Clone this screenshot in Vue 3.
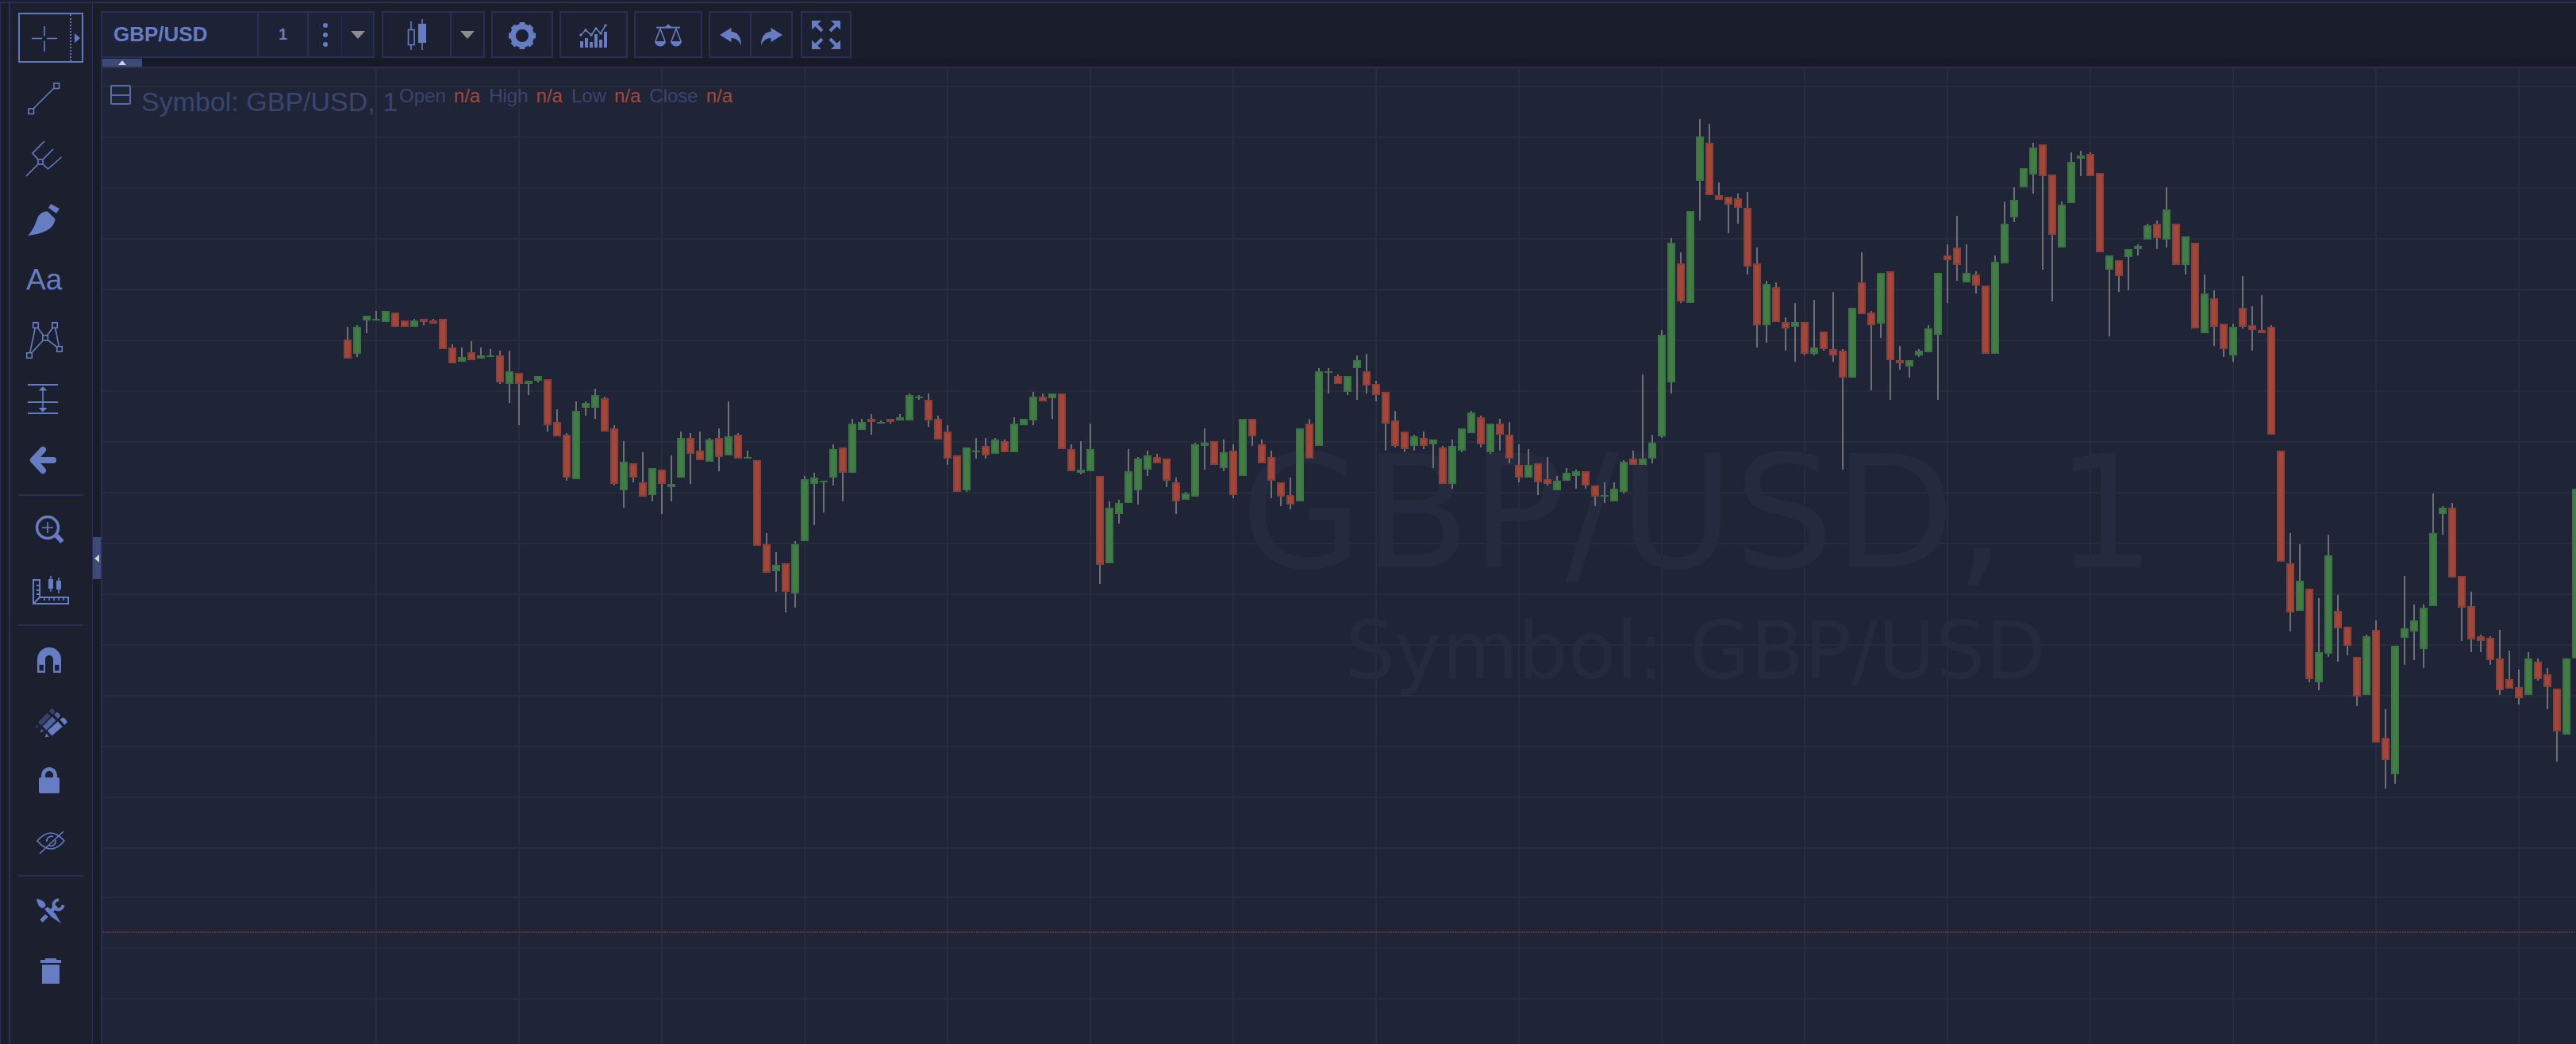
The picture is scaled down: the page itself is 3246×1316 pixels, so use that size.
<script setup>
// [up, bodyTop, bodyBottom, wickTop, wickBottom], one candle every 12px from x = 438
const rows = [
  [0,428,452,412,452],[1,412,446,410,450],[1,398,404,398,420],[1,402,404,392,404],[1,392,406,392,406],
  [0,394,412,394,412],[0,404,412,404,412],[1,404,412,402,412],[0,402,406,402,410],[0,404,408,402,408],
  [0,402,440,402,440],[0,438,458,434,458],[1,450,456,438,456],[0,444,454,430,454],[1,448,452,438,452],
  [1,448,450,440,450],[0,448,482,442,484],[1,468,484,442,508],[0,470,484,470,536],[1,480,484,480,498],
  [1,474,480,474,482],[0,478,536,478,544],[0,532,550,516,550],[0,548,602,546,606],[1,518,604,506,604],
  [1,508,514,506,524],[1,498,514,490,528],[0,502,544,500,544],[0,540,610,536,612],[1,582,618,556,640],
  [0,584,602,584,608],[0,608,626,570,626],[1,590,624,590,632],[0,592,610,592,648],[1,610,614,574,632],
  [1,552,602,544,602],[0,552,572,546,610],[0,568,580,544,580],[1,554,582,552,582],[0,552,576,540,594],
  [1,550,574,506,574],[0,548,578,546,578],[1,576,578,568,578],[0,580,688,580,688],[0,686,722,672,722],
  [1,712,720,696,746],[0,710,746,710,772],[1,686,748,682,766],[1,604,682,600,682],[1,602,610,596,662],
  [1,606,608,606,646],[1,566,602,560,612],[0,564,596,564,632],[1,534,596,528,596],[1,532,542,528,542],
  [0,528,532,522,548],[1,532,534,530,534],[0,528,532,528,534],[1,526,530,522,530],[1,498,530,496,530],
  [1,500,502,498,504],[0,504,530,496,538],[0,528,554,524,554],[0,544,578,536,586],[0,574,620,574,620],
  [1,564,618,564,620],[1,568,570,552,578],[0,562,574,552,578],[1,554,572,552,572],[0,556,570,554,570],
  [1,534,570,526,570],[1,528,536,528,536],[1,500,530,494,536],[0,500,506,496,506],[1,496,502,496,528],
  [0,496,566,496,566],[0,566,594,560,594],[1,592,596,556,598],[1,566,594,534,594],[0,600,712,600,736],
  [1,640,710,632,710],[1,634,648,630,660],[1,594,634,566,634],[1,578,618,576,636],[1,574,592,568,600],
  [0,576,584,572,584],[0,578,606,578,614],[0,608,632,602,648],[1,622,630,620,630],[1,560,626,558,626],
  [1,558,562,540,592],[0,556,586,556,586],[1,570,590,554,594],[0,568,624,560,628],[1,528,600,528,600],
  [0,528,550,528,562],[0,560,584,554,584],[0,576,606,568,628],[0,608,626,608,638],[0,624,636,602,642],
  [1,540,632,540,632],[0,534,578,528,578],[1,468,562,464,562],[1,468,470,464,496],[0,474,484,472,484],
  [1,474,494,474,498],[1,454,464,448,504],[0,468,486,446,496],[0,484,498,480,506],[0,494,534,494,568],
  [0,530,562,518,564],[0,544,566,544,570],[1,550,562,548,568],[0,552,562,544,566],[1,554,560,554,590],
  [0,564,610,562,610],[1,562,610,554,616],[1,540,568,540,570],[1,520,546,518,546],[0,526,560,524,564],
  [1,534,570,534,572],[0,534,548,528,568],[0,548,578,532,584],[0,586,602,560,608],[1,586,602,566,602],
  [0,584,608,584,624],[0,604,610,576,612],[1,606,618,600,618],[1,596,606,590,606],[1,594,600,592,616],
  [0,594,612,594,616],[0,612,626,612,638],[1,624,626,608,634],[1,616,632,608,632],[1,582,620,580,622],
  [0,578,586,568,586],[1,578,586,472,586],[1,558,578,548,584],[1,422,550,416,552],[1,306,482,300,496],
  [0,332,380,318,382],[1,266,382,266,382],[1,172,228,150,278],[0,180,246,156,246],[0,246,252,230,252],
  [0,248,258,248,294],[0,250,262,244,282],[0,262,336,242,346],[0,332,410,312,438],[1,358,410,354,432],
  [0,362,406,356,406],[0,406,414,400,442],[1,406,412,382,456],[0,406,446,406,448],[1,438,446,378,448],
  [0,418,440,418,442],[0,440,448,368,456],[0,442,476,440,592],[1,388,476,388,476],[0,356,396,318,396],
  [0,394,410,392,492],[1,344,408,344,426],[0,342,454,342,504],[0,454,458,436,466],[1,454,462,454,476],
  [1,442,448,440,450],[1,414,444,410,444],[1,344,422,344,504],[0,322,328,308,382],[0,312,334,272,354],
  [1,344,356,308,356],[0,346,360,342,370],[0,360,446,360,446],[1,330,446,322,446],[1,282,332,254,332],
  [1,252,274,236,280],[1,212,236,212,236],[1,186,220,180,244],[0,182,222,182,340],[0,220,296,220,380],
  [1,258,312,254,312],[1,204,256,192,256],[1,196,200,190,222],[0,194,222,192,222],[0,218,318,218,318],
  [1,322,340,322,424],[0,328,348,328,368],[1,314,324,314,366],[1,310,314,308,322],[1,284,302,282,302],
  [0,282,300,278,314],[1,264,302,236,312],[0,282,334,282,334],[1,298,334,298,346],[0,306,414,306,414],
  [1,370,420,346,420],[0,376,412,366,436],[0,408,440,408,450],[1,412,448,408,456],[0,388,412,348,414],
  [0,410,416,386,442],[0,416,420,372,420],[0,412,548,410,548],[0,568,708,568,708],[0,710,772,672,796],
  [1,732,770,686,770],[0,742,856,742,860],[1,822,860,754,870],[1,700,824,674,828],[0,770,792,750,834],
  [0,790,814,790,826],[0,828,878,828,890],[1,802,876,800,876],[0,794,936,782,936],[0,930,958,894,994],
  [1,814,976,814,988],[1,792,804,726,838],[1,782,796,762,832],[1,766,818,762,842],[1,672,764,622,764],
  [1,640,648,638,674],[0,640,728,634,728],[0,726,766,726,808],[0,764,806,746,822],[0,802,808,800,822],
  [0,804,832,802,838],[0,830,870,794,876],[0,856,868,820,868],[0,866,880,844,888],[1,830,876,822,876],
  [0,834,856,830,858],[0,850,866,842,894],[0,868,922,868,960],[1,830,926,830,926],[1,616,830,616,830],
]

const candles = rows.map(([up, top, bottom, wickTop, wickBottom], i) => ({
  x: 438 + 12 * i, up, top, bottom, wickTop, wickBottom,
}))

const hLines = [109, 173, 237, 301, 365, 429, 493, 557, 621, 685, 749, 813, 877, 941, 1005, 1069, 1131, 1195, 1259]
const vLines = Array.from({ length: 16 }, (_, i) => 474 + 180 * i)

const gearTeeth = [0, 45, 90, 135, 180, 225, 270, 315]
const indicatorBars = [[731, 52], [737, 48], [743, 53], [749, 43], [755, 50], [761, 40]]
const indicatorDots = [[732, 44], [738, 38], [745, 44], [751, 36], [757, 42], [763, 32]]
const nodeSquares = [[45, 410], [69, 410], [57, 426], [75, 440], [37, 448]]
const rulerTicks = [56, 62, 68, 74, 80]

const ohlc = ['Open', 'High', 'Low', 'Close']
</script>

<template>
  <div class="page">
    <div class="edge"></div>

    <aside class="sidebar">
      <div class="tool">
        <div class="cross-box">
          <svg width="63" height="59" viewBox="25 18 63 59">
            <path class="line" d="M40 48.5H53M59 48.5H72M56 33V45.5M56 51.5V65" />
          </svg>
          <div class="cross-more"><span class="tri-right"></span></div>
        </div>
      </div>

      <div class="tool">
        <svg width="82" height="76" viewBox="23 86 82 76">
          <path class="line" d="M42 137L68 111" />
          <rect class="line" x="36" y="137" width="6.5" height="6.5" />
          <rect class="line" x="68" y="105" width="6.5" height="6.5" />
        </svg>
      </div>

      <div class="tool">
        <svg width="82" height="76" viewBox="23 162 82 76">
          <path class="line" d="M33 222L48 207M48 201L41 193L56 178M54 201L67 188M54 207L60.5 213L77.5 198" />
          <rect class="line" x="48" y="201" width="6" height="6" />
        </svg>
      </div>

      <div class="tool">
        <svg width="82" height="76" viewBox="23 238 82 76">
          <path class="fill" d="M35 297C43 289 45 280 48 273C51 268 56 266 60 266.5L69.5 276C69 282 65 287 60 290C52 294 44 296 35 297Z" />
          <path class="fill" d="M64 257L75 263L71 269L61 262Z" />
        </svg>
      </div>

      <div class="tool"><span class="text-tool">Aa</span></div>

      <div class="tool">
        <svg width="82" height="76" viewBox="23 390 82 76">
          <path class="line" d="M45 410L37 448L57 426L75 440L69 410L57 426L45 410" />
          <rect v-for="s in nodeSquares" :key="s[0] + s[1]" class="square" :x="s[0] - 3.25" :y="s[1] - 3.25" width="6.5" height="6.5" />
        </svg>
      </div>

      <div class="tool">
        <svg width="82" height="76" viewBox="23 466 82 76">
          <path class="line thick" d="M35 485H73M35 507H73M35 521H73" />
          <path class="line" d="M54 490V516" />
          <path class="fill" d="M54 487L59.5 492.5H48.5ZM54 519.5L48.5 514H59.5Z" />
        </svg>
      </div>

      <div class="tool">
        <svg width="82" height="76" viewBox="23 542 82 76">
          <path class="arrow" d="M42 580L54 567M42 580L54 593M42 580H67" />
        </svg>
      </div>

      <div class="divider"></div>

      <div class="tool">
        <svg width="82" height="76" viewBox="23 630 82 76">
          <circle class="ring" cx="60" cy="665" r="13.5" />
          <path class="line" d="M53 665H67M60 658V672" />
          <path class="handle" d="M71 675L78.5 683" />
        </svg>
      </div>

      <div class="tool">
        <svg width="82" height="76" viewBox="23 706 82 76">
          <path class="line thick" d="M42 731H50V753H86V761H42ZM42 761L50 753M50 738H46M50 744H46M50 749H46" />
          <path v-for="t in rulerTicks" :key="t" class="line" :d="`M${t} 753V757`" />
          <path class="line" d="M64 726V746M74 728V748" />
          <rect class="fill" x="61" y="730" width="6" height="12" />
          <rect class="fill" x="71" y="732" width="6" height="11" />
        </svg>
      </div>

      <div class="divider"></div>

      <div class="tool">
        <svg width="82" height="76" viewBox="23 794 82 76">
          <path class="fill" fill-rule="evenodd" d="M47 848V831A15 15 0 0 1 77 831V848H67V831A5 5 0 0 0 57 831V848ZM49.5 838V845.5H55V838ZM69 838V845.5H74.5V838Z" />
        </svg>
      </div>

      <div class="tool">
        <svg width="82" height="76" viewBox="23 870 82 76">
          <g class="pencil pencil-back" transform="translate(44 918.5) rotate(-45) scale(0.95 0.7)">
            <path d="M0 0L6 -4V4ZM8 -5H27V5H8ZM29 -5H33A3 3 0 0 1 36 -2V2A3 3 0 0 1 33 5H29Z" />
          </g>
          <g class="pencil pencil-mid" transform="translate(50 924) rotate(-45) scale(0.98 0.8)">
            <path d="M0 0L6 -4V4ZM8 -5H27V5H8ZM29 -5H33A3 3 0 0 1 36 -2V2A3 3 0 0 1 33 5H29Z" />
          </g>
          <g class="pencil pencil-front" transform="translate(56 930) rotate(-41)">
            <path d="M0 0L6 -4V4ZM8 -5H27V5H8ZM29 -5H33A3 3 0 0 1 36 -2V2A3 3 0 0 1 33 5H29Z" />
          </g>
        </svg>
      </div>

      <div class="tool">
        <svg width="82" height="76" viewBox="23 946 82 76">
          <path class="shackle" d="M54.5 982V977A7.5 7.5 0 0 1 69.5 977V982" />
          <rect class="fill" x="49" y="980" width="26" height="20" rx="2" />
        </svg>
      </div>

      <div class="tool">
        <svg width="82" height="76" viewBox="23 1022 82 76">
          <path class="line" d="M47 1060Q64 1040 81 1060Q64 1080 47 1060ZM50 1076L80 1048M59 1061A6 6 0 0 1 67 1054.5M70 1059A6 6 0 0 1 62 1066" />
        </svg>
      </div>

      <div class="divider"></div>

      <div class="tool">
        <svg width="82" height="76" viewBox="23 1110 82 76">
          <path class="fill" d="M46 1133C52 1133.5 57 1137 57.5 1141C57 1144 54 1145 52 1144.5C49 1143 47 1139 46 1133Z" />
          <path class="fill" d="M56 1146L60 1143L70 1152L77 1164L65 1156Z" />
          <path class="wrench" d="M52 1161L59 1154M65 1148L71 1142" />
          <path class="jaw" d="M74 1134.5A6 6 0 1 0 79.5 1141" />
        </svg>
      </div>

      <div class="tool">
        <svg width="82" height="76" viewBox="23 1186 82 76">
          <path class="fill" d="M57 1208H71V1210H77V1214H51V1210H57ZM53 1216H75V1240H53Z" />
        </svg>
      </div>
    </aside>

    <div class="handle-strip">
      <div class="handle-tab"><span class="tri-left"></span></div>
    </div>

    <main class="main">
      <header class="toolbar">
        <div class="group">
          <div class="cell symbol">GBP/USD</div>
          <div class="cell interval">1</div>
          <div class="cell dots"><span></span><span></span><span></span></div>
          <div class="cell caret"><span class="tri-down"></span></div>
        </div>

        <div class="group">
          <div class="cell chart-type">
            <svg width="84" height="55" viewBox="483 16 84 55">
              <path class="line" d="M518 27V37M518 57V63M532 24V30M532 54V63" />
              <rect class="line" x="514.5" y="37.5" width="7.5" height="19" />
              <rect class="fill" x="527" y="30" width="10" height="24" />
            </svg>
          </div>
          <div class="cell caret wide"><span class="tri-down"></span></div>
        </div>

        <div class="group gear">
          <svg width="74" height="55" viewBox="621 16 74 55">
            <g transform="translate(658 45)">
              <circle class="gear-ring" r="11.5" />
              <rect v-for="a in gearTeeth" :key="a" class="fill" x="-3.5" y="-17" width="7" height="6" :transform="`rotate(${a})`" />
            </g>
          </svg>
        </div>

        <div class="group indicators">
          <svg width="82" height="55" viewBox="707 16 82 55">
            <rect v-for="b in indicatorBars" :key="b[0]" class="fill" :x="b[0]" :y="b[1]" width="4" :height="60 - b[1]" />
            <path class="line" d="M732 44L738 38L745 44L751 36L757 42L763 32" />
            <circle v-for="d in indicatorDots" :key="d[0]" class="fill" :cx="d[0]" :cy="d[1]" r="1.8" />
          </svg>
        </div>

        <div class="group scales">
          <svg width="82" height="55" viewBox="801 16 82 55">
            <path class="line thick" d="M827 34.7H857" />
            <path class="fill" d="M842 30.5L846 34H838Z" />
            <path class="line" d="M832 36L826 52M832 36L838 52M852 36L846 52M852 36L858 52" />
            <path class="fill" d="M825 52H839A7 6.5 0 0 1 825 52ZM845 52H859A7 6.5 0 0 1 845 52Z" />
          </svg>
        </div>

        <div class="group history">
          <div class="cell undo">
            <svg width="50" height="55" viewBox="895 16 50 55">
              <path class="fill" d="M907 44L921.5 35V40C929 40 934 46 934 57C931 51 927 48 921.5 48V53Z" />
            </svg>
          </div>
          <div class="cell redo">
            <svg width="50" height="55" viewBox="947 16 50 55">
              <path class="fill" d="M986 44L971.5 35V40C964 40 959 46 959 57C962 51 966 48 971.5 48V53Z" />
            </svg>
          </div>
        </div>

        <div class="group fullscreen">
          <svg width="60" height="55" viewBox="1011 16 60 55">
            <path class="fill" d="M1023 26H1035L1023 37.5ZM1059 26H1047L1059 37.5ZM1023 62H1035L1023 50.5ZM1059 62H1047L1059 50.5Z" />
            <path class="shaft" d="M1028 31L1036 39M1054 31L1046 39M1028 57L1036 49M1054 57L1046 49" />
          </svg>
        </div>
      </header>

      <div class="tab-row">
        <div class="tab-up"><span class="tri-up"></span></div>
      </div>

      <section class="chart">
        <svg class="plot" width="3117" height="1230" viewBox="129 86 3117 1230">
          <rect v-for="y in hLines" :key="y" class="grid" x="129" :y="y - 1" width="3117" height="2" />
          <rect v-for="x in vLines" :key="x" class="grid" :x="x - 1" y="87" width="2" height="1229" />
          <text class="mark mark-big" x="1563" y="715">GBP/USD, 1</text>
          <text class="mark mark-small" x="1695" y="855">Symbol: GBP/USD</text>
          <path class="price-line" d="M129 1175H3246" />
          <g v-for="c in candles" :key="c.x">
            <rect class="wick" :x="c.x - 1" :y="c.wickTop" width="2" :height="c.wickBottom - c.wickTop" />
            <rect :class="c.up ? 'up-edge' : 'down-edge'" :x="c.x - 5" :y="c.top" width="10" :height="c.bottom - c.top" />
            <rect v-if="c.bottom - c.top > 4" :class="c.up ? 'up-body' : 'down-body'" :x="c.x - 3" :y="c.top + 2" width="6" :height="c.bottom - c.top - 4" />
          </g>
        </svg>

        <div class="legend">
          <span class="collapse"><i></i></span>
          <span class="legend-title">Symbol: GBP/USD, 1</span>
          <span class="legend-values">
            <template v-for="k in ohlc" :key="k">
              <span class="ohlc-key">{{ k }}</span>
              <span class="ohlc-val">n/a</span>
            </template>
          </span>
        </div>
      </section>
    </main>
  </div>
</template>

<style>
html,
body {
  margin: 0;
  background: #1a1d2a;
  overflow: hidden;
}
</style>

<style scoped>
.page {
  display: flex;
  width: 3246px;
  height: 1312px;
  margin-top: 2px;
  border-top: 2px solid #2a2e55;
  background: #1a1d2a;
  font-family: "Liberation Sans", Arial, sans-serif;
  overflow: hidden;
}

.edge {
  width: 11px;
  flex: none;
  box-sizing: border-box;
  border-left: 1px solid #2a2e55;
}

.sidebar {
  width: 106px;
  flex: none;
  padding: 6px 0 0 10px;
  box-sizing: border-box;
  background: #1c1f2e;
  border-left: 2px solid #2a2e55;
  border-right: 1px solid #2a2e55;
}

.tool {
  display: flex;
  align-items: center;
  width: 82px;
  height: 76px;
}

.tool svg,
.cell svg,
.group > svg {
  display: block;
}

.divider {
  width: 82px;
  height: 2px;
  margin: 5px 0;
  background: #2a2e55;
}

.cross-box {
  display: flex;
  align-self: flex-start;
  width: 82px;
  height: 63px;
  margin-top: 6px;
  box-sizing: border-box;
  border: 2px solid #5f78c0;
}

.cross-more {
  display: flex;
  align-items: center;
  justify-content: center;
  flex: 1;
  border-left: 2px dotted #5f78c0;
}

.tri-right {
  width: 0;
  height: 0;
  margin-left: 2px;
  border-left: 7px solid #667dc4;
  border-top: 6px solid transparent;
  border-bottom: 6px solid transparent;
}

.text-tool {
  margin: 1px 0 0 10px;
  font-size: 37px;
  color: #667dc4;
}

.line {
  fill: none;
  stroke: #667dc4;
  stroke-width: 1.6;
}

.thick {
  stroke-width: 2;
}

.fill {
  fill: #667dc4;
}

.square {
  fill: #1c1f2e;
  stroke: #667dc4;
  stroke-width: 1.6;
}

.arrow {
  fill: none;
  stroke: #667dc4;
  stroke-width: 8;
  stroke-linecap: round;
  stroke-linejoin: round;
}

.ring {
  fill: none;
  stroke: #667dc4;
  stroke-width: 3.5;
}

.handle {
  fill: none;
  stroke: #667dc4;
  stroke-width: 6;
}

.pencil {
  stroke: #1c1f2e;
  stroke-width: 1.4;
}

.pencil-back {
  fill: #364268;
}

.pencil-mid {
  fill: #4e61a0;
}

.pencil-front {
  fill: #667dc4;
}

.shackle {
  fill: none;
  stroke: #667dc4;
  stroke-width: 5;
}

.wrench {
  fill: none;
  stroke: #667dc4;
  stroke-width: 5;
}

.jaw {
  fill: none;
  stroke: #667dc4;
  stroke-width: 4;
}

.gear-ring {
  fill: none;
  stroke: #667dc4;
  stroke-width: 7;
}

.shaft {
  fill: none;
  stroke: #667dc4;
  stroke-width: 4;
}

.handle-strip {
  width: 10px;
  flex: none;
  padding-top: 673px;
  box-sizing: border-box;
}

.handle-tab {
  display: flex;
  align-items: center;
  justify-content: center;
  height: 53px;
  background: #3d4a75;
}

.tri-left {
  width: 0;
  height: 0;
  border-right: 6px solid #d2d2d2;
  border-top: 5px solid transparent;
  border-bottom: 5px solid transparent;
}

.main {
  display: flex;
  flex-direction: column;
  flex: 1;
  min-width: 0;
}

.toolbar {
  display: flex;
  height: 70px;
  padding-top: 10px;
  box-sizing: border-box;
}

.group {
  display: flex;
  height: 59px;
  margin-right: 8px;
  box-sizing: border-box;
  border: 2px solid #2a2e55;
  background: #1c2031;
}

.cell {
  display: flex;
  align-items: center;
  justify-content: center;
  height: 100%;
  box-sizing: border-box;
  border-right: 2px solid #2a2e55;
}

.cell:last-child {
  border-right: none;
}

.group:first-child {
  margin-right: 9px;
  background: #1e2236;
}

.symbol {
  justify-content: flex-start;
  width: 197px;
  padding-left: 14px;
  font-size: 26px;
  font-weight: 700;
  color: #667dc4;
}

.interval {
  width: 63px;
  font-size: 20px;
  font-weight: 700;
  color: #667dc4;
}

.dots {
  flex-direction: column;
  gap: 6px;
  width: 42px;
  border-right: 1px dotted #2a2e55;
}

.dots span {
  width: 6px;
  height: 6px;
  border-radius: 50%;
  background: #667dc4;
}

.caret {
  width: 39px;
}

.caret.wide {
  width: 40px;
}

.tri-down {
  width: 0;
  height: 0;
  border-top: 10px solid #8d8d8d;
  border-left: 9px solid transparent;
  border-right: 9px solid transparent;
}

.chart-type {
  width: 86px;
}

.undo {
  width: 52px;
}

.redo {
  width: 50px;
}

.history {
  margin-right: 10px;
}

.tab-row {
  height: 12px;
  box-sizing: border-box;
  border-left: 2px solid #2a2e55;
  border-bottom: 2px solid #2a2e55;
  background: #181b26;
}

.tab-up {
  display: flex;
  align-items: center;
  justify-content: center;
  width: 50px;
  height: 10px;
  background: #3d4a75;
}

.tri-up {
  width: 0;
  height: 0;
  border-bottom: 6px solid #d2d2d2;
  border-left: 5px solid transparent;
  border-right: 5px solid transparent;
}

.chart {
  position: relative;
  flex: 1;
  border-left: 2px solid #2a2e55;
  background: #1f2436;
  overflow: hidden;
}

.plot {
  display: block;
}

.grid {
  fill: #282c3f;
}

.mark {
  fill: #262a3e;
  font-family: "DejaVu Sans", sans-serif;
}

.mark-big {
  font-size: 198.5px;
}

.mark-small {
  font-size: 99px;
}

.price-line {
  fill: none;
  stroke: #5a3340;
  stroke-width: 2;
  stroke-dasharray: 2 1;
}

.wick {
  fill: #6f7075;
}

.up-edge {
  fill: #3c7344;
}

.up-body {
  fill: #417d45;
}

.down-edge {
  fill: #8b4139;
}

.down-body {
  fill: #a3473a;
}

.legend {
  position: absolute;
  left: 10px;
  top: 21px;
  display: flex;
  align-items: flex-start;
}

.collapse {
  display: flex;
  align-items: center;
  width: 26px;
  height: 25px;
  margin-right: 13px;
  box-sizing: border-box;
  border: 2px solid #566aac;
  border-radius: 2px;
}

.collapse i {
  width: 100%;
  height: 2px;
  background: #566aac;
}

.legend-title {
  margin-top: 2px;
  margin-right: 2px;
  font-size: 34px;
  line-height: 39px;
  color: #3a466f;
}

.legend-values {
  display: flex;
  font-size: 24px;
  line-height: 28px;
}

.ohlc-key {
  margin-right: 10px;
  color: #3a466f;
}

.ohlc-val {
  margin-right: 11px;
  color: #a8483a;
}
</style>
